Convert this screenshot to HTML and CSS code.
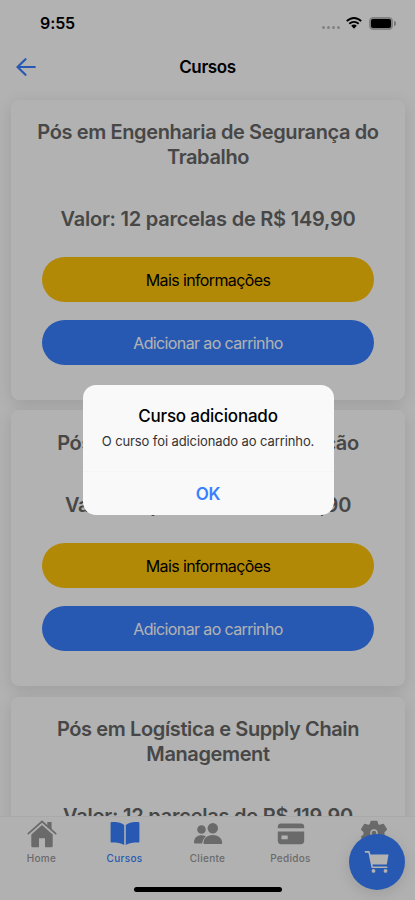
FILE: index.html
```html
<!DOCTYPE html>
<html lang="pt-BR">
<head>
<meta charset="utf-8">
<title>Cursos</title>
<link rel="stylesheet" href="styles.css">
</head>
<body>
<div class="app">
  <div class="status">
    <span class="time">9:55</span>
    <div class="signals">
      <div class="cell"><i></i><i></i><i></i><i></i></div>
      <svg class="wifi" viewBox="0 0 16 12"><g fill="none" stroke="#000" stroke-width="1.9"><path d="M.8 4.2C5-.1 11-.1 15.2 4.2"/><path d="M3.3 6.8c2.7-2.6 6.700-2.600 9.400 0"/></g><path d="M5.200 8.700c1.600-1.500 4-1.500 5.600 0L8 11.700z"/></svg>
      <div class="battery"><b></b></div>
    </div>
  </div>
  <header class="header">
    <svg class="back" viewBox="0 0 20 18"><path d="M9.500 1.200 1.500 9l8 7.800M1.800 9h17" fill="none" stroke="#3880ff" stroke-width="2.200" stroke-linecap="round" stroke-linejoin="round"/></svg>
    <h1>Cursos</h1>
  </header>
  <main class="content">
    <section class="card first">
      <h2>Pós em Engenharia de Segurança do<br>Trabalho</h2>
      <p class="price">Valor: 12 parcelas de R$ 149,90</p>
      <button class="btn info">Mais informações</button>
      <button class="btn add">Adicionar ao carrinho</button>
    </section>
    <section class="card second">
      <h2>Pós em Engenharia de Produção</h2>
      <p class="price">Valor: 12 parcelas de R$ 99,90</p>
      <button class="btn info">Mais informações</button>
      <button class="btn add">Adicionar ao carrinho</button>
    </section>
    <section class="card third">
      <h2>Pós em Logística e Supply Chain<br>Management</h2>
      <p class="price">Valor: 12 parcelas de R$ 119,90</p>
    </section>
  </main>
  <nav class="tabs">
    <div class="tab"><svg viewBox="0 0 30 30"><path d="M4.300 15.500 15 6l10.700 9.500v11.500a1.200 1.200 0 0 1-1.200 1.200h-6.500V19.200h-6v9H5.500A1.200 1.200 0 0 1 4.300 27z"/><path d="M1.300 14.700 15 2.500 28.700 14.700" fill="none" stroke="currentColor" stroke-width="1.700" stroke-linecap="round"/><path d="M20.300 3h4.300v8l-4.300-3.900z"/></svg><span>Home</span></div>
    <div class="tab active"><svg viewBox="0 0 30 30"><path transform="translate(0 .6)" d="M14.200 5.500C11.500 3 7 2.500 1.800 2.500A1.200 1.200 0 0 0 .6 3.700v18.100a1.200 1.200 0 0 0 1.200 1.200c5.200 0 9.200.2 12.400 2.500zM15.800 5.500C18.500 3 23 2.500 28.200 2.500a1.200 1.200 0 0 1 1.200 1.200v18.100a1.200 1.200 0 0 1-1.200 1.200c-5.200 0-9.200.2-12.400 2.500z"/></svg><span>Cursos</span></div>
    <div class="tab"><svg viewBox="0 0 30 30"><circle cx="8.500" cy="10.500" r="4.300"/><circle cx="19.800" cy="9.300" r="5.200"/><path d="M1 23.500c0-5 3.500-7.300 7.500-7.300 1.800 0 3.300.4 4.500 1.200-2.200 1.600-3.400 3.700-3.800 7.100H2c-.7 0-1-.4-1-1zM10.500 24c0-5 4.400-7.900 9.300-7.900s9.400 2.900 9.400 7.900c0 .7-.4 1.100-1.100 1.100H11.600c-.7 0-1.100-.4-1.100-1.100z"/></svg><span>Cliente</span></div>
    <div class="tab"><svg viewBox="0 0 30 30"><path d="M1.800 9.300V7.900A3.400 3.400 0 0 1 5.200 4.500h19.600a3.400 3.400 0 0 1 3.400 3.400v1.400z"/><path fill-rule="evenodd" d="M1.800 12.500h26.400v9.300a3.400 3.400 0 0 1-3.400 3.400H5.200a3.400 3.400 0 0 1-3.400-3.400zm3.700 4v3.800h6.200v-3.800z"/></svg><span>Pedidos</span></div>
    <div class="tab"><svg viewBox="0 0 30 30"><path fill-rule="evenodd" stroke="currentColor" stroke-width="1.800" stroke-linejoin="round" d="m12.300 2.700h5.400l.8 3.000 2 1.100 3.600-1.200 3 4.700-2.500 2.500v2.900l2.500 2.500-3 5.200-3.600-1.200-2 1.100-.8 3.700h-5.400l-.8-3.700-2-1.100-3.600 1.200-3-5.200 2.500-2.500v-2.900l-2.500-2.500 3-4.700 3.600 1.200 2-1.100zM15 9.300a4.700 4.700 0 1 0 0 9.400 4.700 4.700 0 0 0 0-9.400z"/><circle cx="15" cy="14" r="2.300"/></svg><span>Mais</span></div>
  </nav>
  <div class="home-bar"></div>
  <div class="fab"><svg viewBox="0 0 26 24"><path d="M1.500 1.900h3.500l3.300 15.400h14.500" fill="none" stroke="#fff" stroke-width="1.600" stroke-linecap="round" stroke-linejoin="round"/><path d="M5.400 4.400h19.100l-1.700 10.200H7.500z" fill="#fff"/><circle cx="9.500" cy="20.900" r="1.900" fill="#fff"/><circle cx="21.500" cy="20.900" r="1.900" fill="#fff"/></svg></div>
  <div class="backdrop">
    <div class="alert" role="alertdialog">
      <h3>Curso adicionado</h3>
      <p>O curso foi adicionado ao carrinho.</p>
      <button>OK</button>
    </div>
  </div>
</div>
</body>
</html>
```
FILE: styles.css
```css
* { box-sizing: border-box; }
body { margin: 0; background: #fff; }
h1, h2, h3, p { margin: 0; }
button { border: 0; padding: 0; font: inherit; display: block; }
.app {
  position: relative; width: 415px; height: 900px; overflow: hidden;
  display: flex; flex-direction: column; background: #fff;
  font-family: Inter, "Liberation Sans", sans-serif; color: #000;
}
.status { height: 45px; flex: none; display: flex; justify-content: space-between; padding: 14px 22px 0 40px; }
.time { font-size: 16px; line-height: 19px; font-weight: 600; letter-spacing: -.1px; }
.signals { display: flex; height: 18px; align-items: center; }
.cell { display: flex; gap: 2px; margin: 9px 6px 0 0; }
.cell i { width: 3px; height: 3px; border-radius: 50%; background: #bbb; }
.wifi { width: 16px; height: 12px; margin: 0 7px 1px 0; }
.battery { position: relative; width: 24px; height: 13px; border: 1px solid #bbb; border-radius: 4px; padding: 1px; background: #bbb; }
.battery b { display: block; width: 20px; height: 9px; border-radius: 2px; background: #000; }
.battery::after { content: ""; position: absolute; right: -4px; top: 3px; width: 2px; height: 5px; border-radius: 0 2px 2px 0; background: #aaa; }
.header { height: 43px; flex: none; display: grid; grid-template-columns: 52px 1fr 52px; align-items: center; }
.back { width: 20px; height: 18px; margin-left: 16px; }
h1 { font-size: 17px; line-height: 22px; font-weight: 600; text-align: center; letter-spacing: -.35px; }
.content { flex: 1; min-height: 0; overflow: hidden; padding: 12px 10px 0 11px; }
.card { border-radius: 8px; background: #fff; box-shadow: 0 4px 16px rgba(0,0,0,.12); padding: 20px 31px 0; text-align: center; margin-bottom: 10px; }
.first { height: 300px; }
.second { height: 276px; margin-bottom: 11px; padding-top: 21px; }
.third { height: 300px; }
h2, .price { font-size: 20px; line-height: 25px; font-weight: 600; color: #666; white-space: nowrap; margin-left: -20px; margin-right: -20px; }
h2 { letter-spacing: -.38px; }
.price { margin-top: 37px; margin-bottom: 25px; letter-spacing: -.23px; }
.btn { width: 100%; height: 45px; border-radius: 23px; font-size: 16px; letter-spacing: -.62px; margin-bottom: 18px; }
.info { background: #ffc409; color: #000; }
.add { background: #3880ff; color: #fff; }
.tabs { height: 84px; flex: none; display: flex; background: #fefefe; border-top: 1px solid #f2f2f2; padding-top: 2px; }
.tab { flex: 1; display: flex; flex-direction: column; align-items: center; color: #999; font-size: 10px; line-height: 12px; font-weight: 500; letter-spacing: .3px; }
.tab svg { width: 30px; height: 30px; fill: currentColor; }
.tab span { margin-top: 3px; }
.tab.active { color: #3880ff; }
.home-bar { position: absolute; left: 134px; top: 887px; width: 148px; height: 5px; border-radius: 3px; background: #000; }
.fab { position: absolute; left: 349px; top: 834px; width: 56px; height: 56px; border-radius: 50%; background: #3880ff; box-shadow: 0 4px 16px rgba(0,0,0,.12); display: grid; place-items: center; }
.fab svg { width: 26px; height: 24px; }
.backdrop { position: absolute; inset: 0; background: rgba(0,0,0,.3); display: flex; align-items: center; justify-content: center; }
.alert { width: 251px; height: 130px; margin: 0 0 0 1px; border-radius: 13px; background: #f9f9f9; text-align: center; display: flex; flex-direction: column; padding-top: 20px; }
h3 { font-size: 17px; line-height: 22px; font-weight: 500; letter-spacing: -.2px; }
.alert p { font-size: 13px; line-height: 16px; margin-top: 6px; color: #333; white-space: nowrap; letter-spacing: -.1px; }
.alert button { margin-top: auto; height: 44px; border-top: 1px solid #f5f5f5; background: none; color: #3880ff; font-size: 17px; font-weight: 600; letter-spacing: -.3px; }
```
